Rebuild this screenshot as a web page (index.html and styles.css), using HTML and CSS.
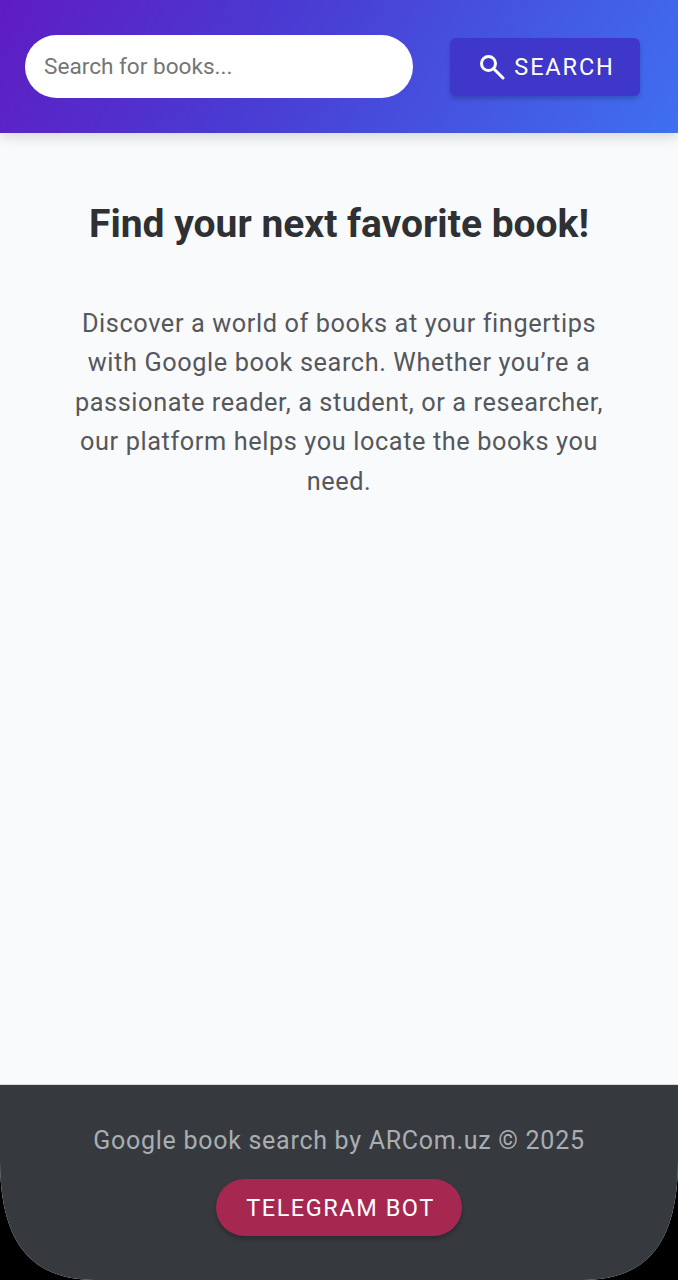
FILE: index.html
```html
<!DOCTYPE html>
<html lang="en">
<head>
<meta charset="utf-8">
<title>Google book search</title>
<link rel="stylesheet" href="styles.css">
</head>
<body>
<div class="app">
  <header class="header">
    <input class="search-input" type="text" placeholder="Search for books...">
    <button class="search-btn" type="button">
      <svg class="search-icon" viewBox="0 0 26 26" aria-hidden="true"><circle cx="9.5" cy="9.5" r="7"/><path d="M14.5 14.5 24 24"/></svg>
      <span>SEARCH</span>
    </button>
  </header>
  <main class="main">
    <h1 class="title">Find your next favorite book!</h1>
    <p class="intro">Discover a world of books at your fingertips with Google book search. Whether you’re a passionate reader, a student, or a researcher, our platform helps you locate the books you need.</p>
  </main>
  <footer class="footer">
    <p class="credit">Google book search by ARCom.uz © 2025</p>
    <button class="bot-btn" type="button">TELEGRAM BOT</button>
  </footer>
</div>
</body>
</html>
```
FILE: styles.css
```css
* { box-sizing: border-box; }
html, body { margin: 0; padding: 0; background: #000; }
body { font-family: Roboto, "Liberation Sans", sans-serif; }
.app { width: 678px; height: 1280px; display: flex; flex-direction: column; background: #f9fafc; clip-path: path("M0 0H678V1160C678 1235 653 1280 583 1280H95C25 1280 0 1235 0 1160Z"); }
.header { height: 133px; flex: none; display: flex; align-items: center; justify-content: space-between; padding: 0 38px 0 25px; background: linear-gradient(120deg, #5f1cc2 0%, #4a3bd3 40%, #3f6ff0 100%); box-shadow: 0 4px 12px rgba(0,0,0,.14); position: relative; }
.search-input { width: 388px; height: 63px; border: 0; border-radius: 32px; background: #fff; padding: 0 19px; font: 400 22.6px Roboto, sans-serif; color: #333; outline: none; }
.search-input::placeholder { color: #757575; opacity: 1; }
.search-btn { width: 190px; height: 58px; display: flex; align-items: center; justify-content: center; gap: 9px; border: 0; border-radius: 6px; background: #3f37c9; color: #fff; font: 400 23.5px Roboto, sans-serif; letter-spacing: 1.85px; box-shadow: 0 3px 4px rgba(0,0,0,.18); padding: 0 0 0 4px; }
.search-icon { width: 26px; height: 26px; fill: none; stroke: #fff; stroke-width: 3px; stroke-linecap: round; flex: none; }
.main { flex: 1; padding: 0 68px; text-align: center; }
.title { margin: 68px -30px 0; font: 700 39px/46px Roboto, sans-serif; color: #2f3033; white-space: nowrap; }
.intro { margin: 57px 0 0; font: 400 25.3px/39.4px Roboto, sans-serif; letter-spacing: .6px; color: #55575b; }
.footer { height: 196px; flex: none; background: #363a3e; border-top: 1px solid #d8dade; text-align: center; padding-top: 38px; }
.credit { margin: 0; font: 400 25px/35px Roboto, sans-serif; letter-spacing: .72px; color: #a9aeb3; }
.bot-btn { display: block; margin: 21px auto 0; width: 246px; height: 57px; border: 0; border-radius: 29px; background: #a62851; color: #fff; font: 400 23.5px Roboto, sans-serif; letter-spacing: 1.55px; box-shadow: 0 3px 4px rgba(0,0,0,.25); padding: 0 0 0 3px; }
```
